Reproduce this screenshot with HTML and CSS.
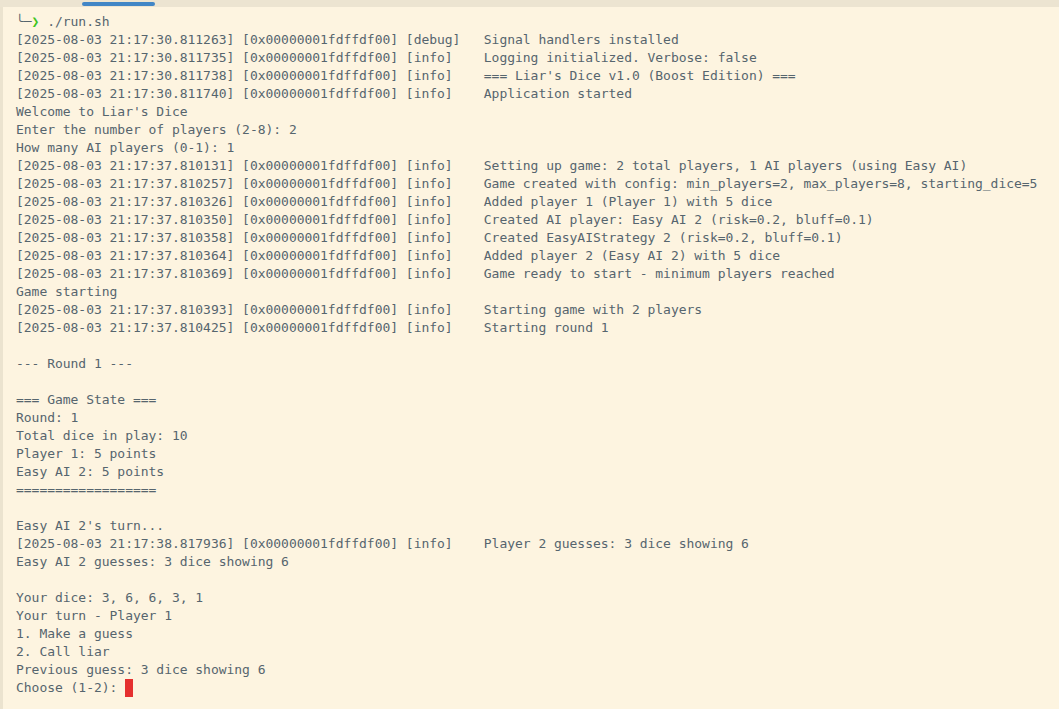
FILE: index.html
```html
<!DOCTYPE html>
<html>
<head>
<meta charset="utf-8">
<link rel="stylesheet" href="styles.css">
</head>
<body>
<div class="topbar"><div class="tab"></div></div>
<div class="main">
<div class="gutter"></div>
<pre class="term">╰─<span class="ok">❯</span> ./run.sh
[2025-08-03 21:17:30.811263] [0x00000001fdffdf00] [debug]   Signal handlers installed
[2025-08-03 21:17:30.811735] [0x00000001fdffdf00] [info]    Logging initialized. Verbose: false
[2025-08-03 21:17:30.811738] [0x00000001fdffdf00] [info]    === Liar's Dice v1.0 (Boost Edition) ===
[2025-08-03 21:17:30.811740] [0x00000001fdffdf00] [info]    Application started
Welcome to Liar's Dice
Enter the number of players (2-8): 2
How many AI players (0-1): 1
[2025-08-03 21:17:37.810131] [0x00000001fdffdf00] [info]    Setting up game: 2 total players, 1 AI players (using Easy AI)
[2025-08-03 21:17:37.810257] [0x00000001fdffdf00] [info]    Game created with config: min_players=2, max_players=8, starting_dice=5
[2025-08-03 21:17:37.810326] [0x00000001fdffdf00] [info]    Added player 1 (Player 1) with 5 dice
[2025-08-03 21:17:37.810350] [0x00000001fdffdf00] [info]    Created AI player: Easy AI 2 (risk=0.2, bluff=0.1)
[2025-08-03 21:17:37.810358] [0x00000001fdffdf00] [info]    Created EasyAIStrategy 2 (risk=0.2, bluff=0.1)
[2025-08-03 21:17:37.810364] [0x00000001fdffdf00] [info]    Added player 2 (Easy AI 2) with 5 dice
[2025-08-03 21:17:37.810369] [0x00000001fdffdf00] [info]    Game ready to start - minimum players reached
Game starting
[2025-08-03 21:17:37.810393] [0x00000001fdffdf00] [info]    Starting game with 2 players
[2025-08-03 21:17:37.810425] [0x00000001fdffdf00] [info]    Starting round 1

--- Round 1 ---

=== Game State ===
Round: 1
Total dice in play: 10
Player 1: 5 points
Easy AI 2: 5 points
==================

Easy AI 2's turn...
[2025-08-03 21:17:38.817936] [0x00000001fdffdf00] [info]    Player 2 guesses: 3 dice showing 6
Easy AI 2 guesses: 3 dice showing 6

Your dice: 3, 6, 6, 3, 1
Your turn - Player 1
1. Make a guess
2. Call liar
Previous guess: 3 dice showing 6
Choose (1-2): <span class="cursor"> </span></pre>
</div>
</body>
</html>
```

FILE: styles.css
```css
html, body {
  margin: 0;
  padding: 0;
  height: 100%;
  background: #fdf4e0;
  overflow: hidden;
}
.topbar {
  height: 7px;
  background: #ece4d1;
  position: relative;
}
.tab {
  position: absolute;
  left: 82px;
  top: 2px;
  width: 73px;
  height: 4px;
  border-radius: 2px;
  background: #4186c6;
}
.main {
  display: flex;
  height: calc(100% - 7px);
}
.gutter {
  width: 3px;
  flex: none;
  background: #ebe3cf;
}
.term {
  margin: 0;
  padding: 6px 0 0 13px;
  font-family: "DejaVu Sans Mono", "Liberation Mono", monospace;
  font-size: 13px;
  letter-spacing: -0.03px;
  line-height: 18px;
  color: #56656e;
  white-space: pre;
}
.ok {
  color: #3fc41e;
  font-weight: bold;
}
.cursor {
  display: inline-block;
  width: 8px;
  height: 18px;
  background: #e5302f;
  vertical-align: top;
}
```
